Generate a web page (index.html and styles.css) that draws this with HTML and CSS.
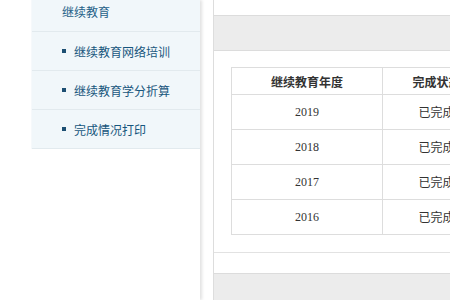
FILE: index.html
```html
<!DOCTYPE html>
<html>
<head>
    <title>继续教育</title>
    <link rel="stylesheet" href="styles.css">
</head>
<body>
    <div class="page">
        <div class="side-col">
            <div class="menu">
                <div class="menu-title">继续教育</div>
                <div class="menu-item"><span class="dot"></span>继续教育网络培训</div>
                <div class="menu-item"><span class="dot"></span>继续教育学分折算</div>
                <div class="menu-item"><span class="dot"></span>完成情况打印</div>
            </div>
        </div>
        <div class="main">
            <div class="main-top"></div>
            <div class="panel-head"></div>
            <div class="panel-body">
                <table class="records">
                    <tr>
                        <th class="col-year">继续教育年度</th>
                        <th class="col-state">完成状态</th>
                    </tr>
                    <tr><td>2019</td><td>已完成</td></tr>
                    <tr><td>2018</td><td>已完成</td></tr>
                    <tr><td>2017</td><td>已完成</td></tr>
                    <tr><td>2016</td><td>已完成</td></tr>
                </table>
            </div>
            <div class="spacer"></div>
            <div class="panel-head"></div>
        </div>
    </div>
</body>
</html>
```

FILE: styles.css
```css
body {
    margin: 0;
    font-family: "Noto Sans CJK SC", "Noto Sans", sans-serif;
    background-color: #fff;
    overflow: hidden;
}

.page {
    display: flex;
    width: 450px;
    height: 300px;
}

.side-col {
    width: 200px;
    flex-shrink: 0;
    padding-left: 31px;
    box-sizing: border-box;
    box-shadow: 2px 0 3px rgba(0, 0, 0, 0.12);
}

.menu {
    background-color: #f1f7fa;
    border-left: 1px solid #f6f9fb;
}

.menu-title {
    height: 31px;
    line-height: 24px;
    padding-left: 30px;
    font-size: 12px;
    color: #1f6188;
    border-bottom: 1px solid #e2eaee;
}

.menu-item {
    display: flex;
    align-items: center;
    height: 38px;
    padding-left: 30px;
    font-size: 12px;
    color: #17567d;
    border-bottom: 1px solid #e2eaee;
}

.menu-item .dot {
    width: 4px;
    height: 4px;
    margin-right: 8px;
    background-color: #1d4f72;
}

.main {
    margin-left: 13px;
    flex: 1;
    border-left: 1px solid #dddddd;
    min-width: 0;
}

.main-top {
    height: 15px;
}

.panel-head {
    height: 34px;
    background-color: #ececec;
    border-top: 1px solid #dcdcdc;
    border-bottom: 1px solid #dcdcdc;
}

.panel-body {
    padding: 16px 0 17px 17px;
    border-bottom: 1px solid #e2e2e2;
}

.spacer {
    height: 20px;
}

.records {
    border-collapse: collapse;
    width: 260px;
    table-layout: fixed;
    color: #333;
}

.records th,
.records td {
    border: 1px solid #dddddd;
    text-align: center;
    padding: 0;
}

.records th {
    height: 26px;
    font-size: 12px;
    font-weight: bold;
}

.records td {
    height: 34px;
    font-family: "Liberation Serif", "Noto Sans CJK SC", serif;
    font-size: 12px;
}

.col-year {
    width: 150px;
}
```
